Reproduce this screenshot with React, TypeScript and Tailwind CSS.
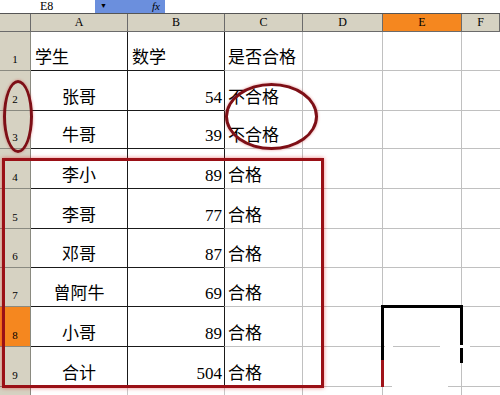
import React from 'react';

const cols = [31, 97, 97, 78, 80, 79, 38];
const heights = [39, 40, 38, 40, 40, 39, 39, 40, 40, 20];

const rows: [string, string, string][] = [
  ['学生', '数学', '是否合格'],
  ['张哥', '54', '不合格'],
  ['牛哥', '39', '不合格'],
  ['李小', '89', '合格'],
  ['李哥', '77', '合格'],
  ['邓哥', '87', '合格'],
  ['曾阿牛', '69', '合格'],
  ['小哥', '89', '合格'],
  ['合计', '504', '合格'],
  ['', '', ''],
];

const serif = { fontFamily: '"Liberation Serif", "Noto Sans CJK SC", serif' };

export default function App() {
  return (
    <div className="relative w-[500px] h-[395px] overflow-hidden bg-white" style={serif}>
      {/* formula bar */}
      <div className="flex h-[13px] text-[12px] leading-[13px] text-black">
        <div className="w-[95px] pl-[40px] bg-white">E8</div>
        <div className="w-[70px] bg-[#6b8fdd] flex items-center justify-between px-[5px]">
          <span className="text-[7px]">▼</span>
          <span className="italic text-[11px]">fx</span>
        </div>
        <div className="flex-1 bg-white" />
      </div>

      {/* sheet */}
      <div
        className="grid border-t border-[#555]"
        style={{ gridTemplateColumns: cols.map((c) => `${c}px`).join(' ') }}
      >
        {/* column headers */}
        <div className="h-[18px] bg-[#d6d2c2] border-r border-b border-[#6b6b6b]" />
        {['A', 'B', 'C', 'D', 'E', 'F'].map((c) => (
          <div
            key={c}
            className={`h-[18px] text-[12px] leading-[17px] text-center border-r border-b border-[#6b6b6b] ${
              c === 'E' ? 'bg-[#f5871f]' : 'bg-[#d6d2c2]'
            }`}
          >
            {c}
          </div>
        ))}

        {rows.map((r, i) => {
          const n = i + 1;
          const h = heights[i];
          const dark = i < 9;
          return (
            <React.Fragment key={i}>
              <div
                className={`flex items-end justify-center pb-[3px] text-[11px] border-r border-b border-[#8a8a80] ${
                  n === 8 ? 'bg-[#f5871f]' : 'bg-[#d6d2c2]'
                }`}
                style={{ height: h }}
              >
                {dark ? n : ''}
              </div>
              <div
                className={`flex items-end pb-[4px] text-[17px] leading-none border-r border-b ${
                  dark ? 'border-[#1a1a1a]' : 'border-[#c8c8c8]'
                } ${i === 0 ? 'justify-start pl-[4px]' : 'justify-center'}`}
                style={{ height: h }}
              >
                {r[0]}
              </div>
              <div
                className={`flex items-end pb-[4px] text-[17px] leading-none border-r border-b ${
                  dark ? 'border-[#1a1a1a]' : 'border-[#c8c8c8]'
                } ${i === 0 ? 'justify-start pl-[4px]' : 'justify-end pr-[2px]'}`}
                style={{ height: h }}
              >
                {r[1]}
              </div>
              <div
                className={`flex items-end pb-[4px] pl-[3px] text-[17px] leading-none border-r border-b border-[#c0c0c0] ${
                  dark ? 'border-l border-l-[#1a1a1a] -ml-px' : ''
                }`}
                style={{ height: h }}
              >
                {r[2]}
              </div>
              <div className="border-r border-b border-[#c0c0c0]" style={{ height: h }} />
              <div className="border-r border-b border-[#c0c0c0]" style={{ height: h }} />
              <div className="border-b border-[#c0c0c0]" style={{ height: h }} />
            </React.Fragment>
          );
        })}
      </div>

      {/* red annotations */}
      <div className="absolute left-[3px] top-[80px] w-[30px] h-[73px] rounded-[50%] border-[3px] border-[#7e0f16] shadow-[0_0_3px_rgba(200,0,0,0.4)]" />
      <div className="absolute left-[225px] top-[83px] w-[93px] h-[67px] rounded-[50%] border-[3px] border-[#7e0f16] shadow-[0_0_3px_rgba(200,0,0,0.4)]" />
      <div className="absolute left-[2px] top-[158px] w-[322px] h-[230px] border-[3px] border-[#9a1016] shadow-[0_0_4px_rgba(220,0,0,0.5)]" />

      {/* partial black frame near E8 */}
      <div className="absolute left-[381px] top-[305px] w-[82px] h-[3px] bg-black" />
      <div className="absolute left-[381px] top-[305px] w-[3px] h-[56px] bg-black" />
      <div className="absolute left-[381px] top-[360px] w-[3px] h-[27px] bg-[#a0141a]" />
      <div className="absolute left-[460px] top-[305px] w-[3px] h-[58px] bg-black" />
      <div className="absolute left-[385px] top-[345px] w-[8px] h-[3px] bg-white" />
      <div className="absolute left-[440px] top-[345px] w-[30px] h-[3px] bg-white" />
      <div className="absolute left-[392px] top-[385px] w-[56px] h-[3px] bg-white" />
    </div>
  );
}
